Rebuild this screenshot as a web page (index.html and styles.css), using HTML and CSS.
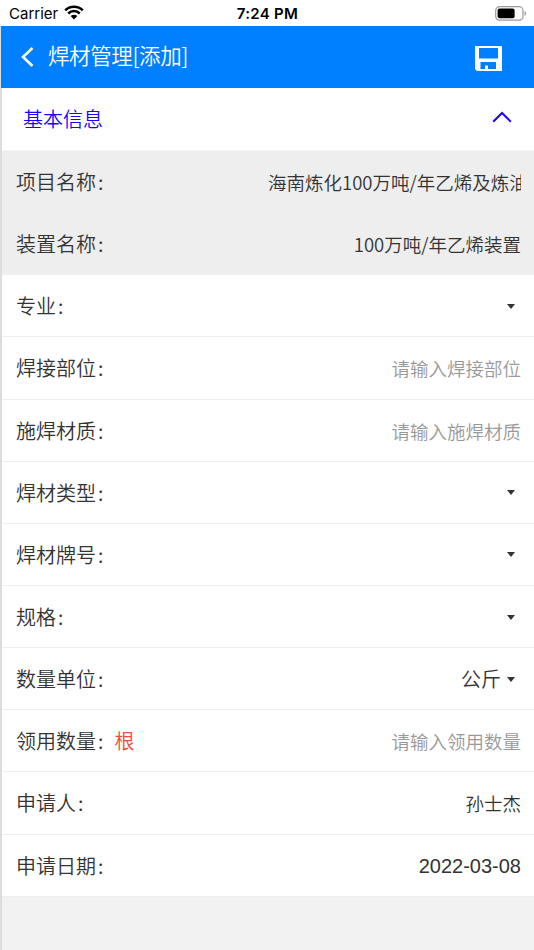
FILE: index.html
```
<!DOCTYPE html>
<html lang="zh-CN">
<head>
    <meta charset="UTF-8">
    <meta name="viewport" content="width=device-width, initial-scale=1.0">
    <title>焊材管理</title>
    <link rel="stylesheet" href="styles.css">
</head>
<body>

    <div class="status-bar">
        <div class="carrier">
            <span>Carrier</span>
            <svg class="wifi" width="20" height="15" viewBox="0 0 20 15">
                <path d="M1.2 5.4a12.4 12.4 0 0 1 17.6 0M4.2 8.5a8.2 8.2 0 0 1 11.6 0" fill="none" stroke="#000" stroke-width="2.5"/>
                <path d="M10 14.4l-3.3-3.3a4.7 4.7 0 0 1 6.6 0z"/>
            </svg>
        </div>
        <div class="time">7:24 PM</div>
        <svg class="battery" width="32" height="15" viewBox="0 0 32 15">
            <rect x="0.7" y="0.7" width="27.3" height="13.4" rx="3.8" fill="#fff" stroke="#999" stroke-width="1.2"/>
            <rect x="2.6" y="2.6" width="17" height="9.6" rx="2"/>
            <path d="M29.6 5v5c2-.8 2-4.2 0-5z" fill="#999"/>
        </svg>
    </div>

    <div class="page">
        <header class="navbar">
            <svg class="back" width="13" height="20" viewBox="0 0 13 20">
                <path d="M11.5 1L2 10l9.5 9" fill="none" stroke="#fff" stroke-width="2.6"/>
            </svg>
            <h1>焊材管理[添加]</h1>
            <svg class="save" width="27" height="25" viewBox="0 0 27 25">
                <path fill="#fff" fill-rule="evenodd" d="M0 0h27v25H2L0 23zM4 2v10.5h19V2zM5.5 16v7H10v-3.5h3V23h8v-7z"/>
            </svg>
        </header>

        <div class="section-title">
            <span>基本信息</span>
            <svg width="20" height="12" viewBox="0 0 20 12">
                <path d="M1.2 10.7L10 2l8.8 8.7" fill="none" stroke="#1a00ff" stroke-width="2"/>
            </svg>
        </div>

        <div class="form">
            <div class="row readonly"><label>项目名称<span class="colon">:</span></label><div class="value clipped">海南炼化100万吨/年乙烯及炼油</div></div>
            <div class="row readonly"><label>装置名称<span class="colon">:</span></label><div class="value">100万吨/年乙烯装置</div></div>
            <div class="row"><label>专业<span class="colon">:</span></label><div class="select"><i class="caret"></i></div></div>
            <div class="row"><label>焊接部位<span class="colon">:</span></label><div class="value placeholder">请输入焊接部位</div></div>
            <div class="row"><label>施焊材质<span class="colon">:</span></label><div class="value placeholder">请输入施焊材质</div></div>
            <div class="row"><label>焊材类型<span class="colon">:</span></label><div class="select"><i class="caret"></i></div></div>
            <div class="row"><label>焊材牌号<span class="colon">:</span></label><div class="select"><i class="caret"></i></div></div>
            <div class="row"><label>规格<span class="colon">:</span></label><div class="select"><i class="caret"></i></div></div>
            <div class="row"><label>数量单位<span class="colon">:</span></label><div class="select">公斤<i class="caret"></i></div></div>
            <div class="row"><label>领用数量<span class="colon">:</span><span class="unit">根</span></label><div class="value placeholder">请输入领用数量</div></div>
            <div class="row"><label>申请人<span class="colon">:</span></label><div class="value">孙士杰</div></div>
            <div class="row"><label>申请日期<span class="colon">:</span></label><div class="value date">2022-03-08</div></div>
        </div>
    </div>

</body>
</html>
```
FILE: styles.css
```
* {
    box-sizing: border-box;
}

body {
    margin: 0;
    height: 950px;
    display: flex;
    flex-direction: column;
    overflow: hidden;
    background: #fff;
    color: #333;
    font-family: "Noto Sans CJK SC", sans-serif;
    font-weight: 350;
}

/* Phone status bar */
.status-bar {
    height: 26px;
    display: grid;
    grid-template-columns: 1fr auto 1fr;
    align-items: center;
    padding: 1px 8px 0 9px;
    font-family: Inter, sans-serif;
    font-size: 15px;
    font-weight: 400;
    color: #000;
}

.carrier {
    display: flex;
    align-items: center;
    gap: 6px;
}

.wifi {
    margin-top: -3px;
}

.time {
    font-weight: 600;
    letter-spacing: 0.3px;
}

.battery {
    justify-self: end;
    margin: -1px -1px 0 0;
}

.page {
    flex: 1;
    border-left: 2px solid #ddd;
    background: #f2f2f2;
}

.navbar {
    height: 62px;
    display: flex;
    align-items: center;
    padding: 0 32px 0 20px;
    background: #0080ff;
    color: #fff;
    margin-left: -1px;
}

h1 {
    margin: 0 auto 0 14px;
    font-size: 21.5px;
    font-weight: 350;
    line-height: 30px;
    letter-spacing: -0.4px;
    padding-bottom: 5px;
}

.save {
    margin-top: 2px;
}

.section-title {
    height: 63px;
    display: flex;
    justify-content: space-between;
    align-items: center;
    padding: 0 22px 0 21px;
    background: #fff;
    border-bottom: 1px solid #f5f5f5;
    color: #1a00ff;
    font-size: 20px;
    line-height: 30px;
}

.section-title svg {
    margin-top: -4px;
}

.form {
    background: #fff;
}

.row {
    height: 62.15px;
    display: flex;
    justify-content: space-between;
    align-items: center;
    padding: 1px 13px 0 14px;
    border-bottom: 1px solid #eee;
    font-size: 20px;
    line-height: 30px;
    white-space: nowrap;
}

.readonly {
    background: #eee;
}

.colon {
    margin: 0 11px 0 2px;
}

.value {
    font-size: 18.5px;
}

/* long project names are cut at the field edge */
.clipped {
    width: 253px;
    overflow: hidden;
}

.date {
    font-family: "Liberation Sans", sans-serif;
    font-size: 20px;
}

.placeholder {
    color: #999;
}

.unit {
    color: #e74c3c;
}

.select {
    display: flex;
    align-items: center;
    gap: 6px;
    padding-right: 6px;
}

.caret {
    border: 4px solid transparent;
    border-top: 5px solid #333;
    border-bottom: 0;
}
```
